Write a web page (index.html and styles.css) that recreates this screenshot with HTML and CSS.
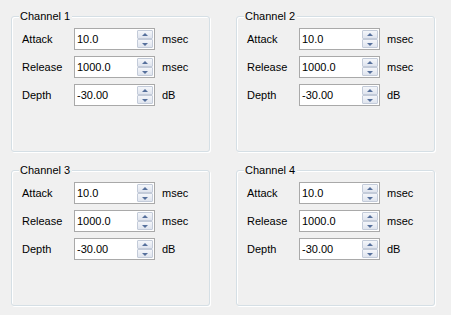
FILE: index.html
```html
<!DOCTYPE html>
<html>
<head>
<meta charset="utf-8">
<link rel="stylesheet" href="styles.css">
</head>
<body>
<div class="panel">
  <section class="group">
    <div class="group-title">Channel 1</div>
    <div class="rows">
      <div class="row"><span class="label">Attack</span><div class="spinbox"><span class="value">10.0</span><div class="spin"><span class="btn up"></span><span class="btn down"></span></div></div><span class="unit">msec</span></div>
      <div class="row"><span class="label">Release</span><div class="spinbox"><span class="value">1000.0</span><div class="spin"><span class="btn up"></span><span class="btn down"></span></div></div><span class="unit">msec</span></div>
      <div class="row"><span class="label">Depth</span><div class="spinbox"><span class="value">-30.00</span><div class="spin"><span class="btn up"></span><span class="btn down"></span></div></div><span class="unit">dB</span></div>
    </div>
  </section>
  <section class="group">
    <div class="group-title">Channel 2</div>
    <div class="rows">
      <div class="row"><span class="label">Attack</span><div class="spinbox"><span class="value">10.0</span><div class="spin"><span class="btn up"></span><span class="btn down"></span></div></div><span class="unit">msec</span></div>
      <div class="row"><span class="label">Release</span><div class="spinbox"><span class="value">1000.0</span><div class="spin"><span class="btn up"></span><span class="btn down"></span></div></div><span class="unit">msec</span></div>
      <div class="row"><span class="label">Depth</span><div class="spinbox"><span class="value">-30.00</span><div class="spin"><span class="btn up"></span><span class="btn down"></span></div></div><span class="unit">dB</span></div>
    </div>
  </section>
  <section class="group">
    <div class="group-title">Channel 3</div>
    <div class="rows">
      <div class="row"><span class="label">Attack</span><div class="spinbox"><span class="value">10.0</span><div class="spin"><span class="btn up"></span><span class="btn down"></span></div></div><span class="unit">msec</span></div>
      <div class="row"><span class="label">Release</span><div class="spinbox"><span class="value">1000.0</span><div class="spin"><span class="btn up"></span><span class="btn down"></span></div></div><span class="unit">msec</span></div>
      <div class="row"><span class="label">Depth</span><div class="spinbox"><span class="value">-30.00</span><div class="spin"><span class="btn up"></span><span class="btn down"></span></div></div><span class="unit">dB</span></div>
    </div>
  </section>
  <section class="group">
    <div class="group-title">Channel 4</div>
    <div class="rows">
      <div class="row"><span class="label">Attack</span><div class="spinbox"><span class="value">10.0</span><div class="spin"><span class="btn up"></span><span class="btn down"></span></div></div><span class="unit">msec</span></div>
      <div class="row"><span class="label">Release</span><div class="spinbox"><span class="value">1000.0</span><div class="spin"><span class="btn up"></span><span class="btn down"></span></div></div><span class="unit">msec</span></div>
      <div class="row"><span class="label">Depth</span><div class="spinbox"><span class="value">-30.00</span><div class="spin"><span class="btn up"></span><span class="btn down"></span></div></div><span class="unit">dB</span></div>
    </div>
  </section>
</div>
</body>
</html>
```

FILE: styles.css
```css
html, body {
  margin: 0;
  padding: 0;
  background: #f0f0f0;
}
body {
  font-family: "Liberation Sans", Arial, sans-serif;
  font-size: 11px;
  color: #000;
  width: 451px;
  height: 315px;
  overflow: hidden;
}
.panel {
  display: grid;
  grid-template-columns: 199px 199px;
  grid-template-rows: 136px 136px;
  column-gap: 26px;
  row-gap: 18px;
  padding: 16px 0 0 11px;
}
.group {
  position: relative;
  border: 1px solid #d5dfe5;
  border-radius: 3px;
  box-shadow: 1px 1px 0 #fff, inset 1px 1px 0 #fff;
  padding: 11px 10px 0 10px;
}
.group-title {
  position: absolute;
  top: -8px;
  left: 7px;
  padding: 0 2px 0 1px;
  background: #f0f0f0;
  line-height: 14px;
}
.rows {
  display: flex;
  flex-direction: column;
  gap: 6px;
}
.row {
  display: flex;
  align-items: center;
  height: 22px;
}
.label {
  width: 52px;
}
.spinbox {
  box-sizing: border-box;
  width: 81px;
  height: 22px;
  border: 1px solid #a9a9a9;
  background: #fff;
  display: flex;
  align-items: stretch;
}
.value {
  flex: 1;
  padding-left: 2px;
  line-height: 20px;
}
.spin {
  width: 16px;
  margin: 1px 1px 1px 0;
  display: flex;
  flex-direction: column;
}
.btn {
  flex: 1;
  position: relative;
  border: 1px solid #c3cbd9;
  border-radius: 1px;
  background: linear-gradient(#f4f6fa, #dfe4ee);
}
.btn + .btn {
  margin-top: 0;
}
.btn::after {
  content: "";
  position: absolute;
  left: 50%;
  top: 50%;
  margin-left: -3px;
  border-left: 3px solid transparent;
  border-right: 3px solid transparent;
}
.up::after {
  margin-top: -2px;
  border-bottom: 3px solid #56709c;
}
.down::after {
  margin-top: -1px;
  border-top: 3px solid #56709c;
}
.unit {
  margin-left: 7px;
}
```
